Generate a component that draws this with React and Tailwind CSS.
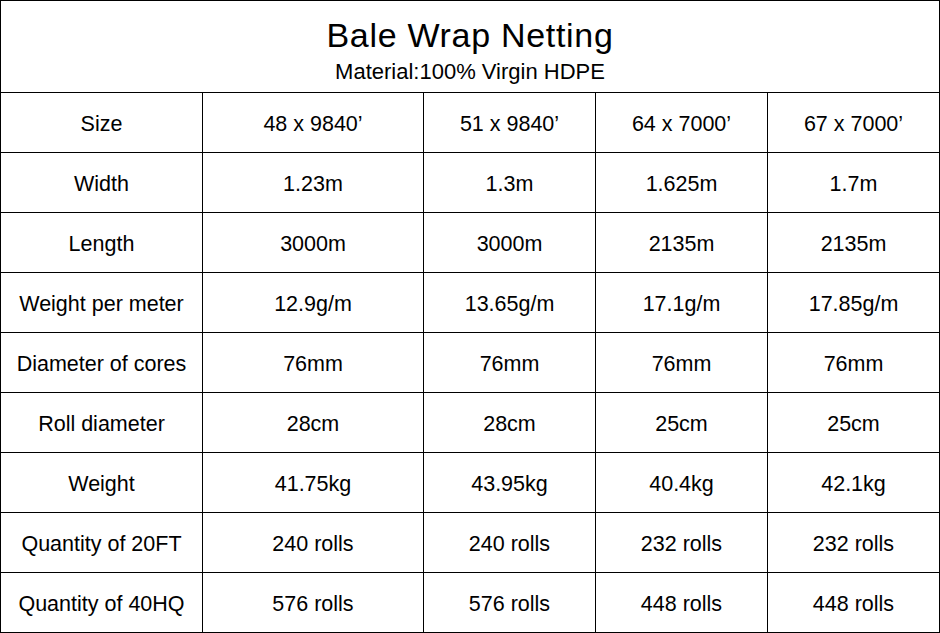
const cols = ['w-[202px]', 'w-[221px]', 'w-[172px]', 'w-[172px]', 'w-[172px]']

const rows = [
  ['Size', '48 x 9840’', '51 x 9840’', '64 x 7000’', '67 x 7000’'],
  ['Width', '1.23m', '1.3m', '1.625m', '1.7m'],
  ['Length', '3000m', '3000m', '2135m', '2135m'],
  ['Weight per meter', '12.9g/m', '13.65g/m', '17.1g/m', '17.85g/m'],
  ['Diameter of cores', '76mm', '76mm', '76mm', '76mm'],
  ['Roll diameter', '28cm', '28cm', '25cm', '25cm'],
  ['Weight', '41.75kg', '43.95kg', '40.4kg', '42.1kg'],
  ['Quantity of 20FT', '240 rolls', '240 rolls', '232 rolls', '232 rolls'],
  ['Quantity of 40HQ', '576 rolls', '576 rolls', '448 rolls', '448 rolls'],
]

export default function App() {
  return (
    <div className="w-[940px] h-[633px] bg-white text-black font-['Liberation_Sans',Arial,sans-serif]">
      <div className="border-l border-t border-black">
        <div className="h-[92px] border-r border-b border-black flex flex-col items-center pt-[15px]">
          <div className="text-[34px] leading-[38px] tracking-[0.7px]">Bale Wrap Netting</div>
          <div className="text-[22px] leading-[24px] mt-[6px]">Material:100% Virgin HDPE</div>
        </div>
        {rows.map((row, i) => (
          <div key={i} className="flex h-[60px]">
            {row.map((cell, j) => (
              <div
                key={j}
                className={`${cols[j]} h-[60px] border-r border-b border-black flex items-center justify-center pt-[3px] text-[21.5px]`}
              >
                {cell}
              </div>
            ))}
          </div>
        ))}
      </div>
    </div>
  )
}
